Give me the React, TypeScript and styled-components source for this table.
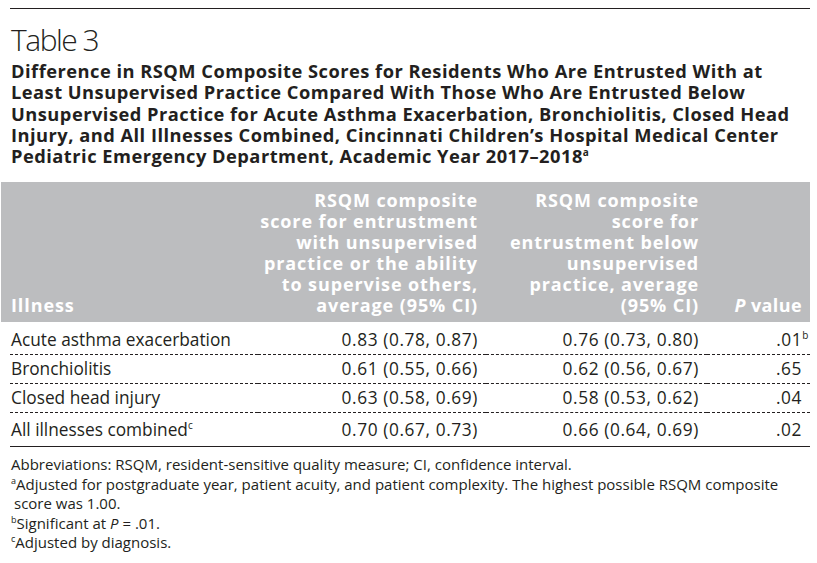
import styled, { createGlobalStyle } from 'styled-components';

const GlobalStyle = createGlobalStyle`
  html, body {
    margin: 0;
    padding: 0;
    background: #fff;
  }
  body {
    font-family: 'Open Sans', 'Noto Sans', sans-serif;
    color: #231f20;
  }
`;

interface IRow {
  illness: string;
  illnessNote?: string;
  above: string;
  below: string;
  p: string;
  pNote?: string;
}

const rows: IRow[] = [
  { illness: 'Acute asthma exacerbation', above: '0.83 (0.78, 0.87)', below: '0.76 (0.73, 0.80)', p: '.01', pNote: 'b' },
  { illness: 'Bronchiolitis', above: '0.61 (0.55, 0.66)', below: '0.62 (0.56, 0.67)', p: '.65' },
  { illness: 'Closed head injury', above: '0.63 (0.58, 0.69)', below: '0.58 (0.53, 0.62)', p: '.04' },
  { illness: 'All illnesses combined', illnessNote: 'c', above: '0.70 (0.67, 0.73)', below: '0.66 (0.64, 0.69)', p: '.02' },
];

const App = () => {
  return (
    <Page>
      <GlobalStyle />
      <TopRule />
      <Label>Table 3</Label>
      <Title>
        Difference in RSQM Composite Scores for Residents Who Are Entrusted With at
        <br />
        Least Unsupervised Practice Compared With Those Who Are Entrusted Below
        <br />
        Unsupervised Practice for Acute Asthma Exacerbation, Bronchiolitis, Closed Head
        <br />
        Injury, and All Illnesses Combined, Cincinnati Children’s Hospital Medical Center
        <br />
        Pediatric Emergency Department, Academic Year 2017–2018<TitleSup>a</TitleSup>
      </Title>

      <Table>
        <colgroup>
          <col style={{ width: 248 }} />
          <col style={{ width: 228 }} />
          <col style={{ width: 221 }} />
          <col style={{ width: 103 }} />
        </colgroup>
        <thead>
          <tr>
            <HeadCell $align="left">Illness</HeadCell>
            <HeadCell>
              RSQM composite
              <br />
              score for entrustment
              <br />
              with unsupervised
              <br />
              practice or the ability
              <br />
              to supervise others,
              <br />
              average (95% CI)
            </HeadCell>
            <HeadCell>
              RSQM composite
              <br />
              score for
              <br />
              entrustment below
              <br />
              unsupervised
              <br />
              practice, average
              <br />
              (95% CI)
            </HeadCell>
            <HeadCell>
              <i>P</i> value
            </HeadCell>
          </tr>
        </thead>
        <tbody>
          {rows.map(row => (
            <BodyRow key={row.illness}>
              <Cell $align="left">
                {row.illness}
                {row.illnessNote && <Sup>{row.illnessNote}</Sup>}
              </Cell>
              <NumCell>{row.above}</NumCell>
              <NumCell>{row.below}</NumCell>
              <NumCell>
                {row.p}
                {row.pNote && <PSup>{row.pNote}</PSup>}
              </NumCell>
            </BodyRow>
          ))}
        </tbody>
      </Table>

      <Notes>
        <Note>Abbreviations: RSQM, resident-sensitive quality measure; CI, confidence interval.</Note>
        <Note>
          <NoteSup>a</NoteSup>Adjusted for postgraduate year, patient acuity, and patient complexity. The
          highest possible RSQM composite score was 1.00.
        </Note>
        <Note>
          <NoteSup>b</NoteSup>Significant at <i>P</i> = .01.
        </Note>
        <Note>
          <NoteSup>c</NoteSup>Adjusted by diagnosis.
        </Note>
      </Notes>
    </Page>
  );
};

export default App;

const Page = styled.main`
  width: 800px;
  padding: 8px 7px 0 10px;
`;

const TopRule = styled.hr`
  margin: 0;
  border: 0;
  border-top: 1.5px solid #231f20;
`;

const Label = styled.h1`
  margin: 13px 0 0 1px;
  font-size: 30px;
  line-height: 36px;
  font-weight: 300;
  letter-spacing: -1.5px;
`;

const Title = styled.h2`
  margin: 2px 0 0 1px;
  font-size: 18.3px;
  line-height: 21.3px;
  font-weight: 750;
  letter-spacing: 0.48px;
`;

const TitleSup = styled.sup`
  font-size: 10px;
  line-height: 0;
  vertical-align: 7px;
`;

const Table = styled.table`
  width: 800px;
  margin-top: 16px;
  border-collapse: collapse;
  table-layout: fixed;
  font-size: 17.3px;
  line-height: 21px;
`;

const HeadCell = styled.th<{ $align?: 'left' | 'right' }>`
  padding: 8px 8px 6px 0;
  background: #bcbdbf;
  color: #fff;
  font-size: 18px;
  font-weight: 750;
  letter-spacing: 0.9px;
  text-align: ${p => p.$align || 'right'};
  vertical-align: bottom;
  white-space: nowrap;

  &:first-child {
    padding-left: 1px;
    box-shadow: -9px 0 0 #bcbdbf;
  }

  &:last-child {
    letter-spacing: 0.4px;
  }

  i {
    font-style: italic;
  }
`;

const BodyRow = styled.tr`
  td {
    padding: 3px 8px 4px 0;
    border-bottom: 1px dashed #231f20;
  }

  &:first-child td {
    padding-top: 7px;
  }

  &:last-child td {
    padding-top: 6px;
    padding-bottom: 6px;
    border-bottom: 1.5px solid #231f20;
  }
`;

const Cell = styled.td<{ $align?: 'left' | 'right' }>`
  text-align: ${p => p.$align || 'right'};
  white-space: nowrap;

  &:first-child {
    padding-left: 1px;
  }
`;

const NumCell = styled(Cell)`
  letter-spacing: 0.6px;
`;

const Sup = styled.sup`
  font-size: 10px;
  line-height: 0;
  vertical-align: 7px;
`;

const PSup = styled(Sup)`
  margin-right: -7px;
`;

const Notes = styled.div`
  margin-top: 8px;
  padding-left: 1px;
  font-size: 15px;
  line-height: 19.5px;
`;

const Note = styled.p`
  margin: 0;
  width: 790px;
  padding-left: 3px;
  text-indent: -3px;

  i {
    font-style: italic;
  }
`;

const NoteSup = styled.sup`
  font-size: 9px;
  line-height: 0;
  vertical-align: 6px;
`;
